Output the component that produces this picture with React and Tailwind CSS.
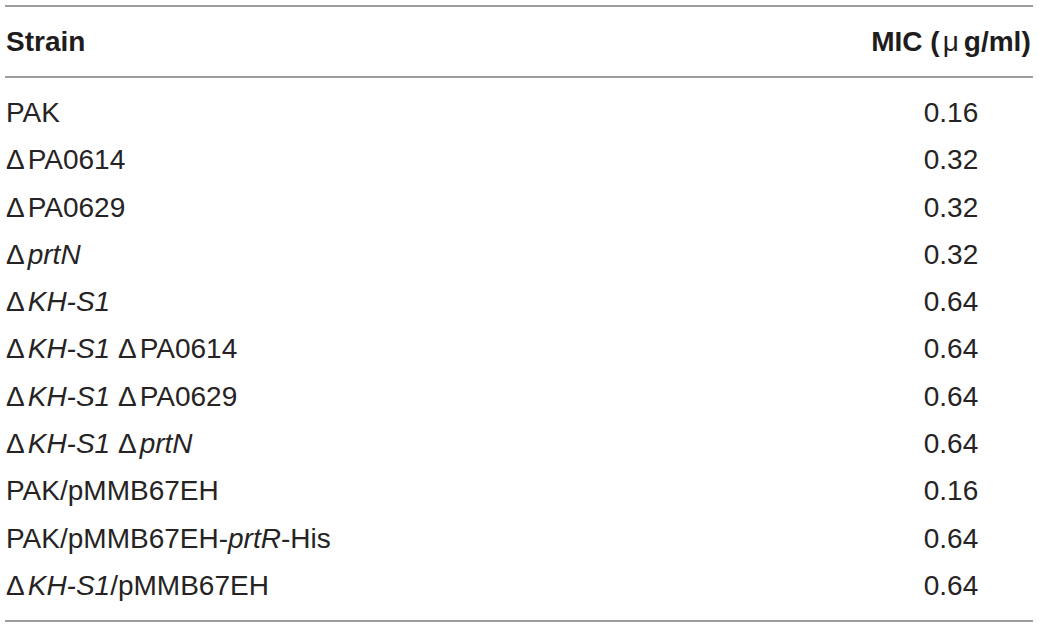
const D = () => <span className="mr-[3px]">Δ</span>;

const rows = [
  { strain: <>PAK</>, mic: "0.16" },
  { strain: <><D />PA0614</>, mic: "0.32" },
  { strain: <><D />PA0629</>, mic: "0.32" },
  { strain: <><D /><i>prtN</i></>, mic: "0.32" },
  { strain: <><D /><i>KH-S1</i></>, mic: "0.64" },
  { strain: <><D /><i>KH-S1</i> <D />PA0614</>, mic: "0.64" },
  { strain: <><D /><i>KH-S1</i> <D />PA0629</>, mic: "0.64" },
  { strain: <><D /><i>KH-S1</i> <D /><i>prtN</i></>, mic: "0.64" },
  { strain: <>PAK/pMMB67EH</>, mic: "0.16" },
  { strain: <>PAK/pMMB67EH-<i>prtR</i>-His</>, mic: "0.64" },
  { strain: <><D /><i>KH-S1</i>/pMMB67EH</>, mic: "0.64" },
];

const App = () => {
  return (
    <div className="w-[1039px] h-[627px] bg-white pt-[5px] pl-[5px] pr-[6px] font-['Liberation_Sans',Arial,sans-serif] text-[#262324]">
      <div className="h-[2px] bg-[#9d9d9d]" />

      {/* Header */}
      <div className="flex h-[69px] leading-[69px] text-[28px] font-bold text-[#1f1c1d]">
        <div className="flex-1 pl-[1px]">Strain</div>
        <div className="w-[164px] text-center whitespace-nowrap">
          MIC (<span className="font-normal mr-[5px] ml-[3px]">μ</span>g/ml)
        </div>
      </div>

      <div className="h-[2px] bg-[#9d9d9d]" />

      {/* Body */}
      <div className="py-[11px] text-[28px]">
        {rows.map((row, index) => (
          <div key={index} className="flex h-[47.3px] leading-[47.3px]">
            <div className="flex-1 pl-[1px] whitespace-nowrap">{row.strain}</div>
            <div className="w-[164px] text-center">{row.mic}</div>
          </div>
        ))}
      </div>

      <div className="h-[2px] bg-[#9d9d9d]" />
    </div>
  );
};

export default App;
